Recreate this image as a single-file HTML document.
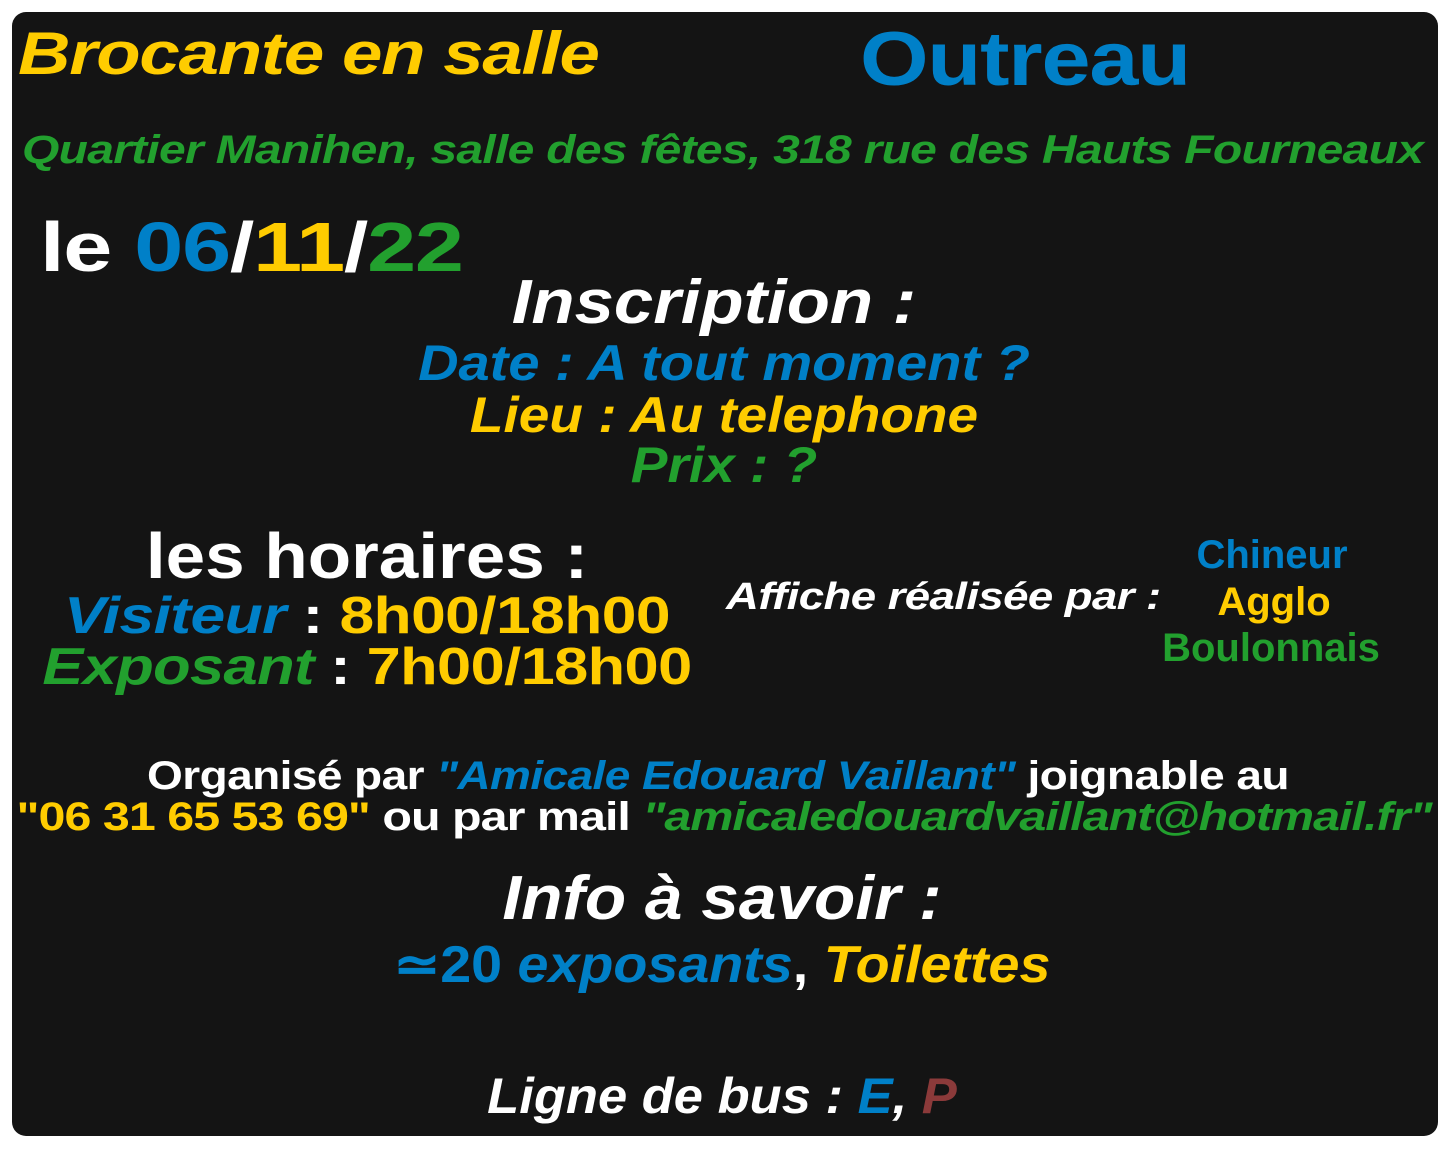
<!DOCTYPE html>
<html><head><meta charset="utf-8"><style>
html,body{margin:0;padding:0;background:#fff;width:1450px;height:1150px;overflow:hidden}
#p{position:absolute;left:12px;top:12px;width:1426px;height:1124px;background:#141414;border-radius:14px}
.t{position:absolute;white-space:nowrap;line-height:1;font-family:"Liberation Sans",sans-serif;font-weight:bold;color:#fff;transform-origin:left center}
.c{text-align:center;transform-origin:center center}
.i{font-style:italic}
.y{color:#ffcc00}.b{color:#0080c8}.g{color:#22a02e}.w{color:#fff}.m{color:#8b3a3a}
</style></head><body>
<div id="p"></div>
<div class="t i y" style="left:18px;top:24px;font-size:60px;letter-spacing:-1px;transform:scaleX(1.21)">Brocante en salle</div>
<div class="t b" style="left:860px;top:22px;font-size:76px;letter-spacing:-1px;transform:scaleX(1.16)">Outreau</div>
<div class="t i g" style="left:22px;top:130px;font-size:40px;letter-spacing:-0.6px;transform:scaleX(1.2)">Quartier Manihen, salle des fêtes, 318 rue des Hauts Fourneaux</div>
<div class="t" style="left:40px;top:212px;font-size:70px;letter-spacing:-1px;transform:scaleX(1.26)">le <span class="b">06</span>/<span class="y">11</span>/<span class="g">22</span></div>
<div class="t c i" style="left:414px;width:600px;top:272px;font-size:62px;transform:scaleX(1.14)">Inscription :</div>
<div class="t c i b" style="left:324px;width:800px;top:338px;font-size:50px;transform:scaleX(1.12)">Date : A tout moment ?</div>
<div class="t c i y" style="left:324px;width:800px;top:390px;font-size:50px;transform:scaleX(1.1)">Lieu : Au telephone</div>
<div class="t c i g" style="left:324px;width:800px;top:440px;font-size:50px;transform:scaleX(1.1)">Prix : ?</div>
<div class="t c" style="left:67px;width:600px;top:524px;font-size:64px;transform:scaleX(1.11)">les horaires :</div>
<div class="t c" style="left:17px;width:700px;top:590px;font-size:52px;letter-spacing:-0.5px;transform:scaleX(1.2)"><span class="i b">Visiteur</span> : <span class="y">8h00/18h00</span></div>
<div class="t c" style="left:17px;width:700px;top:641px;font-size:52px;letter-spacing:-0.5px;transform:scaleX(1.18)"><span class="i g">Exposant</span> : <span class="y">7h00/18h00</span></div>
<div class="t i" style="left:726px;top:578px;font-size:38px;letter-spacing:-0.5px;transform:scaleX(1.2)">Affiche réalisée par :</div>
<div class="t c b" style="left:1122px;width:300px;top:535px;font-size:40px">Chineur</div>
<div class="t c y" style="left:1124px;width:300px;top:582px;font-size:40px">Agglo</div>
<div class="t c g" style="left:1121px;width:300px;top:628px;font-size:40px">Boulonnais</div>
<div class="t c" style="left:0;width:1436px;top:756px;font-size:40px;letter-spacing:-0.5px;transform:scaleX(1.15)">Organisé par <span class="i b">"Amicale Edouard Vaillant"</span> joignable au</div>
<div class="t c" style="left:0;width:1448px;top:797px;font-size:40px;letter-spacing:-0.8px;transform:scaleX(1.21)"><span class="y">"06 31 65 53 69"</span> ou par mail <span class="i g">"amicaledouardvaillant@hotmail.fr"</span></div>
<div class="t c i" style="left:422px;width:600px;top:868px;font-size:62px;transform:scaleX(1.09)">Info à savoir :</div>
<div class="t c" style="left:322px;width:800px;top:939px;font-size:52px;transform:scaleX(1.07)"><span class="b">≃20 <span class="i">exposants</span></span>, <span class="i y">Toilettes</span></div>
<div class="t c i" style="left:422px;width:600px;top:1071px;font-size:50px;transform:scaleX(1.05)">Ligne de bus : <span class="b">E</span>, <span class="m">P</span></div>
</body></html>
